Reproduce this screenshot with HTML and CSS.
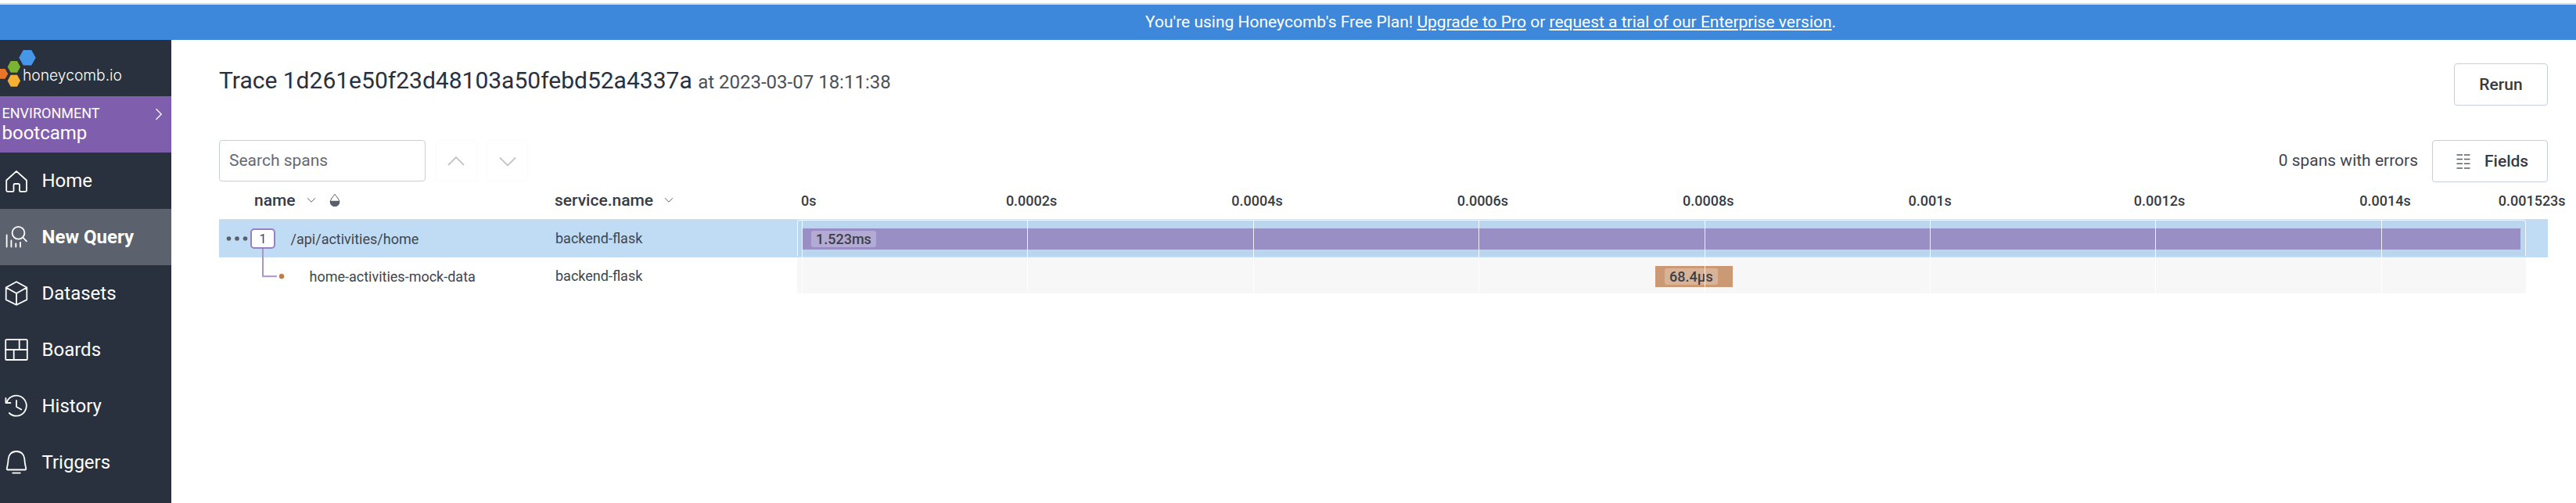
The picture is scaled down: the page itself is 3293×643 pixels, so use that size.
FILE: index.html
```
<!DOCTYPE html>
<html lang="en">
<head>
<meta charset="utf-8">
<title>Trace - Honeycomb</title>
<link rel="stylesheet" href="styles.css">
</head>
<body>
<div class="banner"><p class="banner-text">You're using Honeycomb's Free Plan! <a href="#">Upgrade to Pro</a> or <a href="#">request a trial of our Enterprise version</a>.</p></div>
<div class="shell">
  <nav class="sidebar">
    <div class="brand">
      <svg width="219" height="72" viewBox="0 0 219 72">
        <path fill="#4797e8" d="M29.800 13h10.400l5.500 9.800-5.500 9.800h-10.400l-5.500-9.800z"/>
        <path fill="#7ab432" d="M13.700 27h8.300l4 7.400-4 7.400h-8.300l-4-7.400z"/>
        <path fill="#e87528" d="M-2 37h8.500l3.800 6.400-3.800 6.300h-8.500z"/>
        <path fill="#f4b134" d="M13.700 44.800h8.300l4 7.500-4 7.500h-8.300l-4-7.500z"/>
        <text class="brand-name" x="29" y="51.500" textLength="127" lengthAdjust="spacingAndGlyphs">honeycomb.io</text>
      </svg>
    </div>
    <div class="env">
      <div>
        <div class="env-label">ENVIRONMENT</div>
        <div class="env-name">bootcamp</div>
      </div>
      <svg class="env-arrow" width="10" height="16" viewBox="0 0 10 16"><path d="M1.500 1.300L8.200 8l-6.700 6.700"/></svg>
    </div>
    <a class="nav-item">
      <svg class="nav-icon" viewBox="0 0 42 72"><path d="M8.200 35.500L21 23.800l13 11.700v12.800a1.500 1.500 0 0 1-1.500 1.500h-6.500a1 1 0 0 1-1-1v-7.300a1.500 1.500 0 0 0-1.500-1.500h-4.500a1.500 1.500 0 0 0-1.500 1.500v7.300a1 1 0 0 1-1 1h-6.800a1.500 1.500 0 0 1-1.500-1.500z"/></svg>
      <span>Home</span>
    </a>
    <a class="nav-item active">
      <svg class="nav-icon" viewBox="0 0 42 72"><circle cx="23.500" cy="30.700" r="7.900"/><path d="M29.200 36.500l4.700 4.900M8.600 33.500v15M14.400 40.500v8M20.300 44.500v4M26 43v5.500"/></svg>
      <span>New Query</span>
    </a>
    <a class="nav-item">
      <svg class="nav-icon" viewBox="0 0 42 72"><path d="M21 21.200l13.300 7.300v15.600L21 50.800 7.700 44.100V28.500zM7.700 28.500L21 36l13.300-7.500M21 36v14.500"/></svg>
      <span>Datasets</span>
    </a>
    <a class="nav-item">
      <svg class="nav-icon" viewBox="0 0 42 72"><rect x="7.200" y="23.200" width="27.600" height="25.800" rx="1"/><path d="M7.200 36h27.600M24.700 23.200V36M17.700 36v13"/></svg>
      <span>Boards</span>
    </a>
    <a class="nav-item">
      <svg class="nav-icon" viewBox="0 0 42 72"><path d="M8.500 31.500A13 13 0 1 1 11.800 45M7.400 26v6h6M21 29v8l6.200 3.500"/></svg>
      <span>History</span>
    </a>
    <a class="nav-item">
      <svg class="nav-icon" viewBox="0 0 42 72"><path d="M21 22c-6.500 0-10 4.500-10.300 9.500-.3 5.500-.7 7.500-1.900 12.200-.3 1.200.1 1.800 1.200 1.800h22c1.100 0 1.500-.6 1.200-1.800-1.200-4.700-1.600-6.700-1.900-12.200C31 26.500 27.500 22 21 22zM16.200 49.600h9.600"/></svg>
      <span>Triggers</span>
    </a>
  </nav>
  <main class="main">
    <header class="heading">
      <h1 class="title">Trace 1d261e50f23d48103a50febd52a4337a <span class="title-time">at 2023-03-07 18:11:38</span></h1>
      <button class="button rerun">Rerun</button>
    </header>
    <div class="toolbar">
      <div class="search">Search spans</div>
      <button class="step"><svg width="22" height="14" viewBox="0 0 22 14"><path d="M1 12L11 2l10 10"/></svg></button>
      <button class="step"><svg width="22" height="14" viewBox="0 0 22 14"><path d="M1 2.500l10 10 10-10"/></svg></button>
      <span class="errors">0 spans with errors</span>
      <button class="button fields">
        <svg width="18" height="21" viewBox="0 0 18 21"><path d="M.5 2H8M10 2h7.500M.5 7.500H8M10 7.500h7.500M.5 13.200H8M10 13.200h7.500M.5 19H8M10 19h7.500"/></svg>
        <span>Fields</span>
      </button>
    </div>
    <div class="table-head">
      <div class="head-name">
        <span>name</span>
        <svg class="caret" width="12" height="8" viewBox="0 0 12 8"><path d="M1 1.200l5 5 5-5"/></svg>
        <svg class="drop" width="14" height="18" viewBox="0 0 14 18"><path fill="none" stroke="#5a606b" d="M7 1.200C5 4.500 1.300 7.500 1.300 11a5.700 5.700 0 0 0 11.400 0C12.700 7.500 9 4.500 7 1.200z"/><path fill="#5a606b" d="M.8 9.800h12.400c.6 4.200-2.400 7.200-6.200 7.200S.2 14 .8 9.800z"/></svg>
      </div>
      <div class="head-service">
        <span>service.name</span>
        <svg class="caret" width="12" height="8" viewBox="0 0 12 8"><path d="M1 1.200l5 5 5-5"/></svg>
      </div>
      <div class="axis">
        <span class="tick"><span>0s</span></span>
        <span class="tick"><span>0.0002s</span></span>
        <span class="tick"><span>0.0004s</span></span>
        <span class="tick"><span>0.0006s</span></span>
        <span class="tick"><span>0.0008s</span></span>
        <span class="tick"><span>0.001s</span></span>
        <span class="tick"><span>0.0012s</span></span>
        <span class="tick short"><span>0.0014s</span></span>
        <span class="tick last"><span>0.001523s</span></span>
      </div>
    </div>
    <div class="spans">
      <div class="row selected">
        <div class="cell-name">
          <svg class="dots" width="28" height="8" viewBox="0 0 28 8"><circle cx="3.500" cy="4" r="2.800"/><circle cx="14" cy="4" r="2.800"/><circle cx="24.500" cy="4" r="2.800"/></svg>
          <span class="count">1</span>
          <span class="root-label">/api/activities/home</span>
        </div>
        <div class="cell-service">backend-flask</div>
        <div class="lane"><div class="bar purple" style="margin-left:6px;width:2196px"><span class="duration">1.523ms</span></div></div>
      </div>
      <div class="row">
        <div class="cell-name"><span class="child-label">home-activities-mock-data</span></div>
        <div class="cell-service">backend-flask</div>
        <div class="lane"><div class="bar orange" style="margin-left:1097px;width:99px"><span class="duration">68.4µs</span></div></div>
      </div>
      <svg class="branch" width="30" height="42" viewBox="0 0 30 42"><path d="M2 0v35.300h18"/><circle cx="26" cy="35.300" r="3.200"/></svg>
      <div class="gridlines"><i></i><i></i><i></i><i></i><i></i><i></i><i></i><i></i></div>
    </div>
  </main>
</div>
</body>
</html>
```
FILE: styles.css
```
* {
  box-sizing: border-box;
}

body {
  margin: 0;
  padding-top: 4px;
  height: 643px;
  overflow: hidden;
  background: #fff;
  color: #40454f;
  font-family: Roboto, "Liberation Sans", sans-serif;
}

button {
  font: inherit;
  color: inherit;
  padding: 0;
}

/* plan banner */
.banner {
  height: 47px;
  border-top: 2px solid #d9dde0;
  background: #3d88db;
  color: #fff;
  padding-left: 1464px;
}

.banner-text {
  margin: 0;
  font-size: 21px;
  line-height: 45px;
  white-space: nowrap;
}

.banner-text a {
  color: inherit;
  text-decoration: underline;
}

.shell {
  display: flex;
  height: 592px;
}

/* sidebar */
.sidebar {
  flex: none;
  width: 219px;
  background: #28313d;
  color: #fff;
}

.brand {
  height: 72px;
}

.brand svg {
  display: block;
}

.brand-name {
  fill: #fff;
  font-family: Inter, sans-serif;
  font-size: 19.5px;
  font-weight: 300;
}

.env {
  display: flex;
  justify-content: space-between;
  height: 72px;
  padding: 10px 11px 0 2.500px;
  background: #805eae;
}

.env-label {
  font-size: 18px;
  line-height: 23px;
}

.env-name {
  font-size: 24px;
  line-height: 28px;
}

.env-arrow {
  margin-top: 5px;
  fill: none;
  stroke: #fff;
  stroke-width: 1.3;
}

.nav-item {
  display: flex;
  align-items: center;
  gap: 11.500px;
  height: 72px;
  font-size: 24px;
}

.nav-item.active {
  background: #5c626d;
  font-weight: 700;
}

.nav-icon {
  width: 42px;
  height: 72px;
  fill: none;
  stroke: #fff;
  stroke-width: 1.8;
  stroke-linecap: round;
  stroke-linejoin: round;
}

/* main area */
.main {
  flex: 1;
  min-width: 0;
  padding: 30px 0 0 61px;
}

.heading,
.toolbar {
  display: flex;
  width: 2977px;
}

.heading {
  justify-content: space-between;
  height: 98px;
}

.title {
  margin: 0;
  color: #28313d;
  font-size: 30px;
  font-weight: 400;
  line-height: 44px;
}

.title-time {
  color: #4a505a;
  font-size: 24px;
}

.button {
  height: 54px;
  border: 1px solid #c5cfdf;
  border-radius: 4px;
  background: #fff;
  color: #363b44;
  font-size: 21px;
  font-weight: 500;
}

.rerun {
  width: 120px;
}

.toolbar {
  height: 53px;
  font-size: 21px;
}

.search {
  width: 264px;
  border: 1px solid #c5cfdf;
  border-radius: 4px;
  padding-left: 12px;
  color: #646a75;
  line-height: 51px;
}

.step {
  display: flex;
  align-items: center;
  justify-content: center;
  width: 53px;
  margin-left: 12.500px;
  border: 1px solid #fbfbfb;
  border-radius: 4px;
  background: #fff;
}

.step svg {
  fill: none;
  stroke: #c4c4c4;
  stroke-width: 1.8;
}

.errors {
  margin-left: auto;
  margin-right: 18px;
  line-height: 53px;
}

.fields {
  display: flex;
  align-items: center;
  width: 148px;
  padding-left: 30px;
  gap: 18px;
}

.fields svg {
  stroke: #5a606b;
  stroke-width: 1.6;
}

/* trace table */
.table-head,
.row {
  display: grid;
  grid-template-columns: 429px 310px 2210px;
  width: 2977px;
}

.table-head {
  height: 49px;
  border-bottom: 1px solid #d8dee8;
  color: #363b44;
}

.head-name,
.head-service {
  display: flex;
  align-items: center;
  gap: 14px;
  font-size: 21px;
  font-weight: 500;
}

.head-name {
  padding-left: 45px;
}

.caret {
  fill: none;
  stroke: #5a606b;
  stroke-width: 1;
}

.drop {
  margin-left: 3px;
}

.axis {
  display: flex;
  align-items: center;
  padding-left: 5px;
  font-size: 18px;
  font-weight: 500;
}

.tick {
  flex: 0 0 288.400px;
  white-space: nowrap;
}

.tick.short {
  flex-basis: 177.500px;
}

.tick.last {
  flex-basis: 60px;
}

.tick + .tick span {
  margin-left: -26.500px;
}

.spans {
  position: relative;
  width: 2977px;
  font-size: 18px;
}

.row {
  height: 48px;
}

.selected {
  background: #c0dcf5;
}

.cell-name {
  display: flex;
  align-items: center;
  padding-left: 9px;
}

.dots {
  fill: #5a606b;
}

.count {
  width: 32px;
  height: 26px;
  margin-left: 3px;
  border: 2px solid #9a80c0;
  border-radius: 5px;
  background: #fff;
  font-size: 16px;
  line-height: 23px;
  text-align: center;
}

.root-label {
  margin-left: 19.500px;
}

.child-label {
  margin-left: 106.500px;
}

.cell-service {
  padding-left: 1px;
  line-height: 48px;
}

.lane {
  height: 46px;
  padding-top: 11px;
  border-radius: 0 0 4px 4px;
  background: #f7f7f7;
}

.selected .lane {
  border: 1px solid #f4f9fd;
  border-bottom: 0;
  border-radius: 4px 4px 0 0;
  padding-top: 10px;
  background: #bad5ee;
}

.bar {
  display: flex;
  height: 27px;
  padding: 3px 0 0 11px;
  color: #3c4048;
}

.purple {
  background: #9a8fc4;
}

.orange {
  padding-left: 12px;
  background: #cb9a74;
}

.duration {
  height: 21px;
  padding: 0 6px;
  border-radius: 3px;
  background: rgba(255, 255, 255, 0.250);
  font-weight: 500;
  line-height: 21px;
}

.branch {
  position: absolute;
  left: 54px;
  top: 37px;
  fill: #c47a45;
}

.branch path {
  fill: none;
  stroke: #ab93cf;
  stroke-width: 2;
}

.gridlines {
  position: absolute;
  top: 1px;
  bottom: 2px;
  left: 745px;
  display: flex;
  gap: 287.400px;
}

.gridlines i {
  width: 1px;
  background: rgba(255, 255, 255, 0.850);
}
```
